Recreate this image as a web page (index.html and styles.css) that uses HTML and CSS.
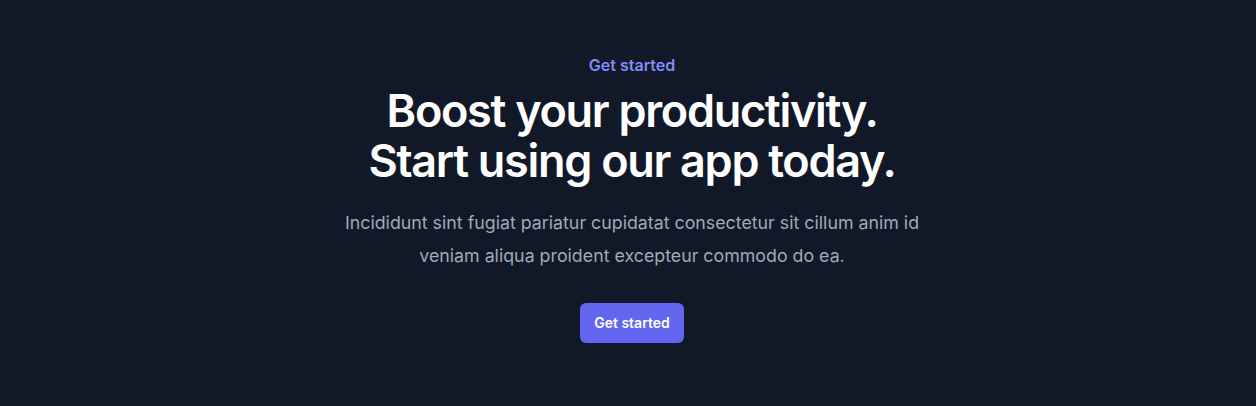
FILE: index.html
```html
<!DOCTYPE html>
<html lang="en">
<head>
<meta charset="utf-8">
<title>Get started</title>
<link rel="stylesheet" href="styles.css">
</head>
<body>
<section class="cta">
  <p class="eyebrow">Get started</p>
  <h2 class="title">Boost your productivity.<br>Start using our app today.</h2>
  <p class="lead">Incididunt sint fugiat pariatur cupidatat consectetur sit cillum anim id veniam aliqua proident excepteur commodo do ea.</p>
  <div class="actions">
    <a href="#" class="btn">Get started</a>
  </div>
</section>
</body>
</html>
```
FILE: styles.css
```css
html, body {
  margin: 0;
  padding: 0;
  background: #111827;
}
body {
  font-family: Inter, "Noto Sans", sans-serif;
  height: 406px;
}
.cta {
  display: flex;
  flex-direction: column;
  align-items: center;
  text-align: center;
  padding: 53px 0 0 8px;
}
.eyebrow {
  margin: 0;
  font-size: 16px;
  line-height: 24px;
  font-weight: 600;
  color: #818cf8;
}
.title {
  margin: 9px 0 0;
  font-size: 45px;
  line-height: 50px;
  font-weight: 600;
  letter-spacing: -1.3px;
  color: #ffffff;
}
.lead {
  margin: 20px 0 0;
  max-width: 600px;
  font-size: 17.8px;
  line-height: 33px;
  color: #a0aab8;
}
.actions {
  margin-top: 31px;
  display: flex;
  justify-content: center;
}
.btn {
  display: inline-block;
  background: #6366f1;
  color: #ffffff;
  text-decoration: none;
  font-size: 14px;
  font-weight: 600;
  line-height: 20px;
  padding: 10px 14px;
  border-radius: 6px;
}
```
